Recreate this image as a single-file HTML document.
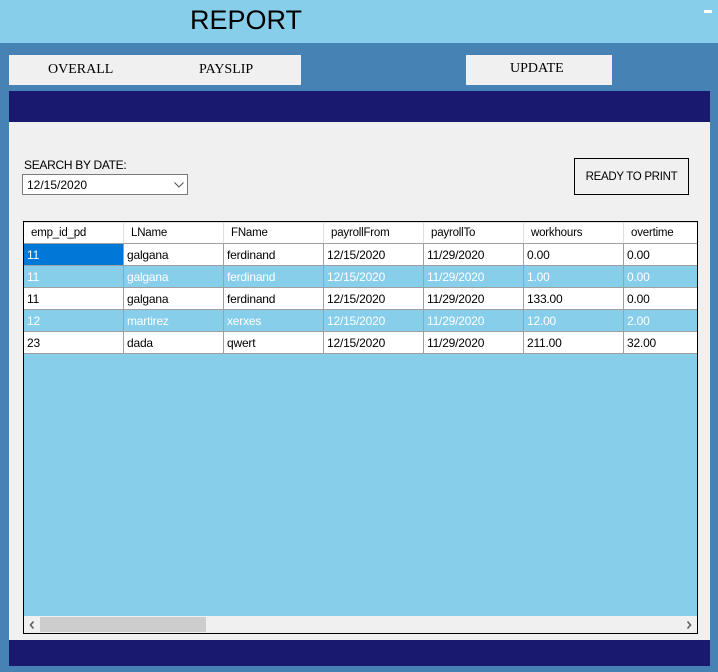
<!DOCTYPE html>
<html><head><style>
*{margin:0;padding:0;box-sizing:border-box}
body{width:718px;height:672px;background:#4682B4;position:relative;overflow:hidden;font-family:"Liberation Sans",Arial,sans-serif}
.a{position:absolute}
.btn{background:#f0f0f0;font-family:"Liberation Serif",serif;font-size:14px;color:#000}
table{border-collapse:collapse;font-size:12px;table-layout:fixed}
td{height:22px;border:1px solid #a0a0a0;padding:0 0 0 3px;white-space:nowrap;overflow:hidden;letter-spacing:-0.2px}
tr.h td{background:#fff;color:#000;padding-left:7px;height:21px;border-color:#e0e0e0 #e0e0e0 #a0a0a0 #e0e0e0;font-size:11.5px}
tr.w td{background:#fff;color:#000}
tr.b td{background:#87CEEB;color:#fff}
</style></head><body>
<div class="a" style="left:0;top:0;width:718px;height:43px;background:#87CEEB"></div>
<div class="a" style="left:190px;top:5px;font-size:27px;color:#000">REPORT</div>
<div class="a" style="left:704px;top:10px;width:8px;height:3px;background:#fff"></div>
<div class="a btn" style="left:9px;top:55px;width:292px;height:30px"></div>
<div class="a" style="left:48px;top:62px;font-family:'Liberation Serif',serif;font-size:14px">OVERALL</div>
<div class="a" style="left:199px;top:62px;font-family:'Liberation Serif',serif;font-size:14px">PAYSLIP</div>
<div class="a btn" style="left:466px;top:55px;width:146px;height:30px"></div>
<div class="a" style="left:510px;top:61px;font-family:'Liberation Serif',serif;font-size:14px">UPDATE</div>
<div class="a" style="left:9px;top:91px;width:701px;height:31px;background:#191970"></div>
<div class="a" style="left:9px;top:122px;width:701px;height:518px;background:#f0f0f0"></div>
<div class="a" style="left:9px;top:640px;width:701px;height:26px;background:#191970"></div>
<div class="a" style="left:24px;top:158px;font-size:12px;color:#000;letter-spacing:-0.3px">SEARCH BY DATE:</div>
<div class="a" style="left:22px;top:174px;width:166px;height:21px;background:#fff;border:1px solid #7a7a7a;font-size:12px;padding:3px 0 0 4px">12/15/2020
<svg class="a" style="left:151px;top:7px" width="10" height="6"><path d="M0.5 0.5L5 5L9.5 0.5" stroke="#555" fill="none"/></svg></div>
<div class="a" style="left:574px;top:158px;width:115px;height:37px;border:1px solid #000;font-size:11.5px;padding-top:12px;text-align:center;letter-spacing:-0.3px">READY TO PRINT</div>
<div class="a" style="left:23px;top:221px;width:675px;height:413px;border:1px solid #000;background:#87CEEB;overflow:hidden">
<table style="width:700px;margin-left:-1px">
<colgroup><col style="width:100px"><col style="width:100px"><col style="width:100px"><col style="width:100px"><col style="width:100px"><col style="width:100px"><col style="width:100px"></colgroup>
<tr class="h"><td>emp_id_pd</td><td>LName</td><td>FName</td><td>payrollFrom</td><td>payrollTo</td><td>workhours</td><td>overtime</td></tr>
<tr class="w"><td style="background:#0078d7;color:#fff">11</td><td>galgana</td><td>ferdinand</td><td>12/15/2020</td><td>11/29/2020</td><td>0.00</td><td>0.00</td></tr>
<tr class="b"><td>11</td><td>galgana</td><td>ferdinand</td><td>12/15/2020</td><td>11/29/2020</td><td>1.00</td><td>0.00</td></tr>
<tr class="w"><td>11</td><td>galgana</td><td>ferdinand</td><td>12/15/2020</td><td>11/29/2020</td><td>133.00</td><td>0.00</td></tr>
<tr class="b"><td>12</td><td>martirez</td><td>xerxes</td><td>12/15/2020</td><td>11/29/2020</td><td>12.00</td><td>2.00</td></tr>
<tr class="w"><td>23</td><td>dada</td><td>qwert</td><td>12/15/2020</td><td>11/29/2020</td><td>211.00</td><td>32.00</td></tr>
</table>
<div class="a" style="left:0;top:394px;width:673px;height:17px;background:#f0f0f0">
<svg class="a" style="left:5px;top:5px" width="6" height="8"><path d="M4.5 0.5L1.5 4L4.5 7.5" stroke="#606060" stroke-width="1.6" fill="none"/></svg>
<div class="a" style="left:16px;top:1px;width:166px;height:15px;background:#cdcdcd"></div>
<svg class="a" style="left:662px;top:5px" width="6" height="8"><path d="M1.5 0.5L4.5 4L1.5 7.5" stroke="#606060" stroke-width="1.6" fill="none"/></svg>
</div>
</div>
</body></html>
